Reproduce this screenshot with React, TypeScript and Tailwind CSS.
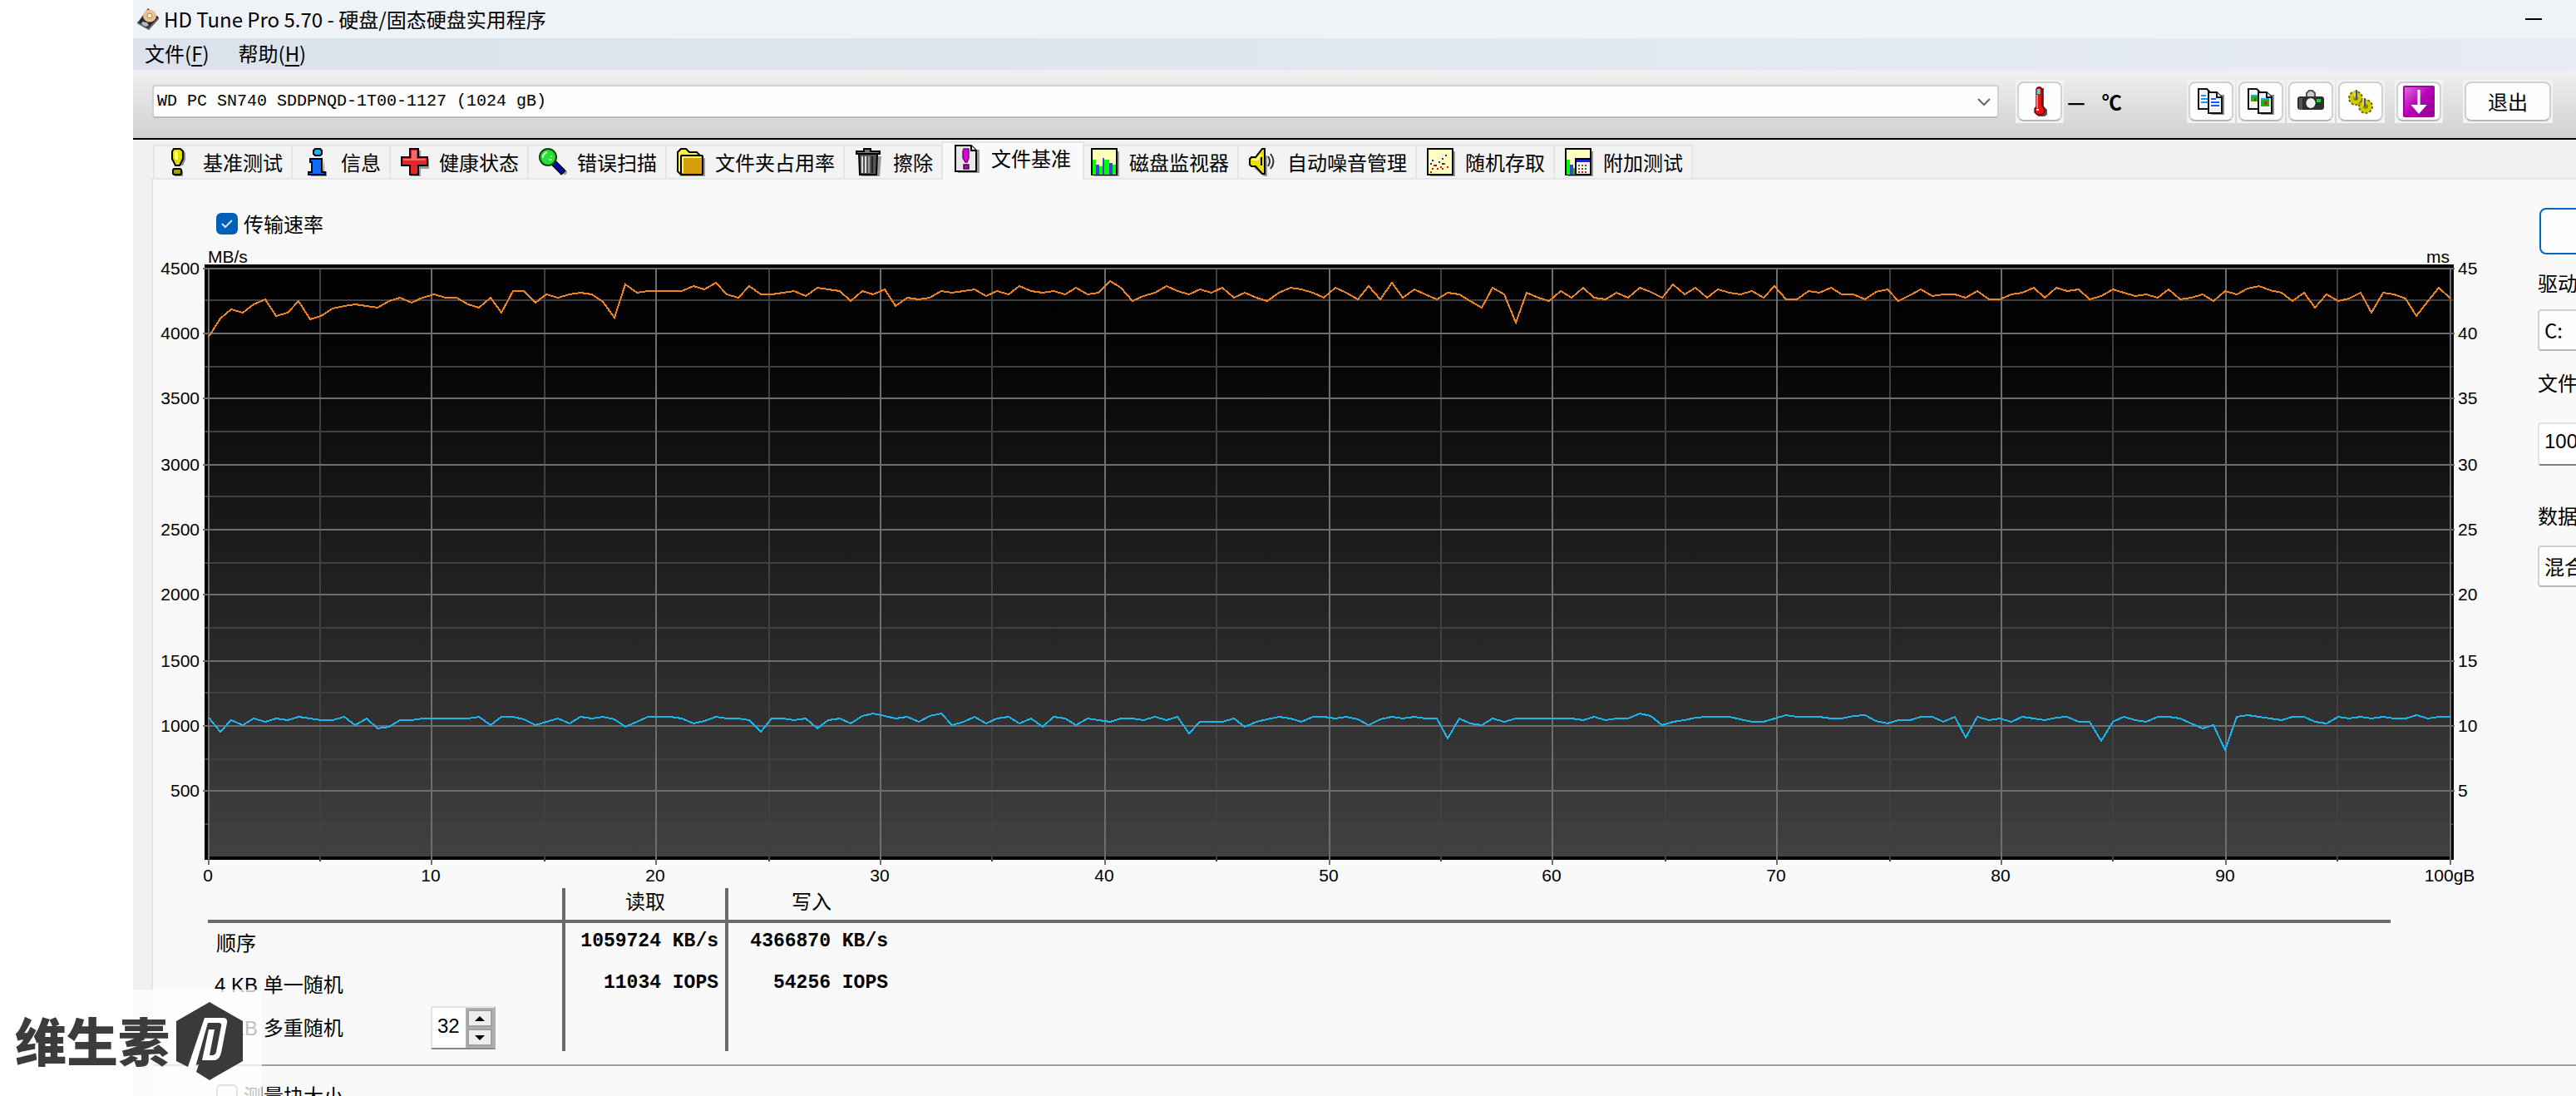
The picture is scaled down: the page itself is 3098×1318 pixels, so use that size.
import { useState } from 'react'
import type { ReactNode } from 'react'

// Sample heights in chart units, measured down from the top of the frame
const writeSamples = [
  88, 66, 55, 59, 49, 43, 63, 59, 45, 67, 63, 54, 51, 49, 51, 53, 45, 41, 47, 41,
  37, 41, 41, 49, 53, 41, 59, 33, 33, 47, 37, 41, 37, 35, 37, 46, 65, 25, 35, 33,
  33, 33, 33, 27, 31, 23, 37, 41, 27, 37, 37, 35, 33, 39, 29, 31, 33, 45, 33, 37,
  31, 51, 41, 43, 41, 33, 35, 33, 31, 39, 33, 37, 27, 33, 35, 33, 37, 29, 37, 35,
  21, 29, 45, 39, 35, 27, 33, 37, 31, 35, 29, 41, 35, 41, 45, 35, 29, 31, 35, 41,
  29, 35, 43, 27, 43, 23, 41, 31, 37, 43, 35, 37, 45, 53, 29, 37, 71, 35, 41, 45,
  33, 41, 29, 41, 43, 35, 41, 29, 34, 41, 25, 37, 29, 41, 31, 35, 37, 33, 41, 27,
  43, 43, 33, 35, 29, 37, 37, 43, 34, 31, 45, 38, 31, 39, 37, 37, 41, 33, 43, 43,
  37, 35, 29, 41, 29, 33, 31, 43, 39, 31, 35, 39, 37, 41, 31, 43, 41, 37, 45, 33,
  37, 30, 27, 32, 35, 45, 35, 53, 37, 45, 42, 35, 59, 35, 37, 42, 63, 45, 29, 42,
]

const readSamples = [
  546, 563, 549, 555, 547, 551, 547, 549, 545, 547, 549, 549, 545, 555, 547, 559, 557, 549, 549, 547,
  547, 547, 547, 547, 545, 555, 545, 545, 548, 555, 551, 547, 553, 545, 547, 545, 548, 557, 551, 545,
  545, 545, 547, 553, 550, 545, 547, 547, 549, 563, 547, 547, 549, 547, 559, 549, 547, 553, 544, 541,
  544, 547, 545, 551, 544, 541, 555, 551, 545, 553, 547, 545, 553, 547, 557, 545, 547, 555, 547, 549,
  551, 547, 547, 549, 545, 549, 545, 565, 551, 551, 551, 547, 557, 551, 548, 545, 547, 551, 545, 545,
  547, 545, 548, 555, 548, 545, 547, 545, 547, 547, 571, 547, 553, 555, 547, 551, 547, 547, 547, 547,
  547, 547, 549, 545, 549, 547, 547, 541, 544, 555, 551, 549, 546, 545, 545, 545, 548, 551, 551, 547,
  543, 545, 545, 545, 547, 547, 544, 543, 550, 553, 549, 549, 545, 545, 551, 545, 570, 545, 549, 547,
  551, 545, 547, 549, 546, 545, 551, 551, 574, 551, 545, 549, 551, 545, 545, 547, 553, 559, 555, 585,
  545, 543, 545, 547, 549, 545, 545, 551, 553, 545, 547, 545, 547, 545, 547, 547, 543, 547, 545, 545,
]

// Grid lines are two units thick and sit on even coordinates
const colAt = (i: number) => 2 * Math.floor((i * 2696) / 20)
const rowAt = (i: number) => 4 + 2 * Math.floor((i * 708) / 18)
const range = (n: number) => Array.from({ length: n }, (_, i) => i)
const toPoints = (samples: number[]) =>
  samples.map((y, i) => `${Math.round(1 + (i * 2696) / (samples.length - 1))},${y - 1}`).join(' ')

function TransferChart() {
  return (
    <svg viewBox="-60 -22 2812 768" className="block w-full" fontFamily='"Liberation Sans", Arial, sans-serif' fontSize="21">
      <defs>
        <linearGradient id="plot" x1="0" y1="0" x2="0" y2="1">
          <stop offset="0" stopColor="#000" />
          <stop offset="0.1" stopColor="#020202" />
          <stop offset="1" stopColor="#414141" />
        </linearGradient>
      </defs>
      <rect x="-4" y="0" width="2705" height="716" fill="#000" />
      <rect x="0" y="4" width="2697" height="708" fill="url(#plot)" />
      <g fill="#404040" shapeRendering="crispEdges">
        {range(10).map(i => <rect key={i} x={colAt(i + 0.5)} y="4" width="2" height="714" />)}
        {range(9).map(i => <rect key={i} x="-4" y={rowAt(i + 0.5)} width="2704" height="2" />)}
      </g>
      <g fill="#6e6e6e" shapeRendering="crispEdges">
        {range(11).map(i => <rect key={i} x={colAt(i)} y="4" width="2" height="718" />)}
        {range(9).map(i => <rect key={i} x="-6" y={rowAt(i)} width="2708" height="2" />)}
      </g>
      <g fill="none" strokeWidth="2" shapeRendering="crispEdges">
        <polyline points={toPoints(writeSamples)} stroke="#f08220" />
        <polyline points={toPoints(readSamples)} stroke="#1cb4ea" />
      </g>
      <g fill="#000">
        <text x="0" y="-2">MB/s</text>
        <text x="2696" y="-2" textAnchor="end">ms</text>
        {range(9).map(i => (
          <text key={i} x="-10" y={rowAt(i) + 8} textAnchor="end">{4500 - i * 500}</text>
        ))}
        {range(9).map(i => (
          <text key={i} x="2706" y={rowAt(i) + 8}>{45 - i * 5}</text>
        ))}
        {range(11).map(i => (
          <text key={i} x={colAt(i)} y="742" textAnchor="middle">{i === 10 ? '100gB' : i * 10}</text>
        ))}
      </g>
    </svg>
  )
}

function Icon({ children, size = 'size-[34px]', box = '0 0 17 17' }: { children: ReactNode; size?: string; box?: string }) {
  return <svg viewBox={box} className={`${size} shrink-0`} aria-hidden="true">{children}</svg>
}

const icons = {
  benchmark: (
    <Icon>
      <path d="M6 1h5l1.5 2v4L11 10.5H8L5.500 7z" fill="#888" />
      <path d="M5.500.5h4L11 2v4.500l-2 4H6.500l-2-4V2z" fill="#dede00" stroke="#000" />
      <path d="M6 2h2v5H6.500L6 5z" fill="#ffff70" />
      <path d="M6 13.500h5V17H6z" fill="#888" />
      <rect x="5" y="12.500" width="5" height="3.500" rx="1" fill="#a0a000" stroke="#000" />
    </Icon>
  ),
  info: (
    <Icon>
      <path d="M13 6v8h1.500v3H5v-1h7z" fill="#888" />
      <path d="M6.500 1.500l1-1h3l1 1v2l-1 1h-3l-1-1z" fill="#12b4f4" stroke="#000" />
      <path d="M4.500 6.500h7v8h2V16h-10v-1.500h2v-6h-1z" fill="#0a6cf8" stroke="#000" />
    </Icon>
  ),
  health: (
    <Icon>
      <path d="M6 1.500h6v5h5v6h-5V17H6z" fill="#999" />
      <path d="M5.500.5h5v5H16v5h-5.500V16h-5v-5.500h-5v-5h5z" fill="#e02828" stroke="#000" />
      <path d="M6.500 1.500h3v5H15v1H6.500zM1.500 6.500h5v1h-5z" fill="#f66" />
    </Icon>
  ),
  scan: (
    <Icon>
      <path d="M10 9.500l6.500 6" stroke="#999" strokeWidth="2.500" />
      <path d="M8.500 8.500L15 15" stroke="#000" strokeWidth="4" />
      <path d="M9 9l5.500 5.500" stroke="#0404b8" strokeWidth="2" />
      <circle cx="5.500" cy="5.500" r="5" fill="#2cdc38" stroke="#084808" />
      <path d="M2.500 6A3.500 3.500 0 0 1 5 2.500" stroke="#c8ffc8" fill="none" />
      <path d="M6 7h2M7 5h1" stroke="#98f898" />
    </Icon>
  ),
  folder: (
    <Icon>
      <path d="M5 6h12v11H2v-2h3z" fill="#999" />
      <path d="M.5 13.500v-11l2-2h3l2 2H12L13.500 4v3" fill="#fcf050" stroke="#000" />
      <path d="M.5 2.500V14l2 2" fill="none" stroke="#000" />
      <rect x="2.500" y="4.500" width="13" height="11.500" rx=".5" fill="#d8a008" stroke="#000" />
      <path d="M3.500 15V5.500h11" stroke="#fcf080" fill="none" />
    </Icon>
  ),
  trash: (
    <Icon>
      <path d="M4 5h12l-1 12H4z" fill="#999" />
      <path d="M2.500 3.500h11L13 16H3z" fill="#555" stroke="#000" />
      <path d="M4.500 5v10M6.500 5v10" stroke="#ddd" />
      <path d="M8.500 5v10" stroke="#999" />
      <path d="M10.500 5v10" stroke="#222" />
      <path d="M1 3.500V2h4.500V.5h4V2H15v1.500z" fill="#777" stroke="#000" />
    </Icon>
  ),
  file: (
    <Icon>
      <path d="M3 3h13v14H3z" fill="#999" />
      <path d="M1.500.5H11l3 3V16H1.500z" fill="#e8e8e8" stroke="#000" />
      <path d="M11 .5v3h3" fill="#fff" stroke="#000" />
      <path d="M6.500 2.500h3V8l-1 2.500h-1L6 8V4z" fill="#e000e0" stroke="#700070" strokeWidth=".7" />
      <rect x="6.500" y="12" width="3" height="2.500" fill="#c000c0" stroke="#400040" strokeWidth=".7" />
    </Icon>
  ),
  monitor: (
    <Icon>
      <path d="M2 2h15v15H2z" fill="#999" />
      <rect x=".5" y=".5" width="15" height="15.500" fill="#ffffb8" stroke="#000" />
      <path d="M1 7h2v9H1zM5 11h2v5H5zM8 7h3v9H8zM13 10h2v6h-2z" fill="#0f0" />
      <path d="M3 10h2v6H3zM7 6h1v10H7zM11 9h2v7h-2z" fill="#4040d8" />
    </Icon>
  ),
  sound: (
    <Icon>
      <path d="M3 12l6 5h2V4z" fill="#999" />
      <path d="M.5 6.500l1-1H4l4-5h1.500v15H8L4 11H1.500l-1-1z" fill="#ece000" stroke="#000" />
      <path d="M7.500 5.500v5" stroke="#000" />
      <path d="M2 7h3l2-3" stroke="#ffff90" fill="none" />
      <path d="M11.500 5q2 3 0 6M13 3.500q3.500 4.500 0 9" stroke="#333" fill="none" />
    </Icon>
  ),
  random: (
    <Icon>
      <path d="M2 2h15v15H2z" fill="#999" />
      <rect x=".5" y=".5" width="15" height="15.500" fill="#ffffc0" stroke="#000" />
      <path d="M2 9h1v1H2zM3 7h1v1H3zM5 10h1v1H5zM7 8h1v1H7zM9 6h1v1H9zM11 4h1v1h-1zM9 9h1v1H9z" fill="#2020d0" />
      <path d="M2 14h1v1H2zM3 12h1v1H3zM6 12h1v1H6zM8 11h1v1H8zM10 9h1v1h-1zM12 11h1v1h-1zM9 12h1v1H9zM4 10h1v1H4z" fill="#e01010" />
    </Icon>
  ),
  extra: (
    <Icon>
      <path d="M2 2h15v15H2z" fill="#999" />
      <rect x=".5" y=".5" width="15" height="15.500" fill="#ffffc0" stroke="#000" />
      <path d="M1 7h2v9H1z" fill="#0f0" />
      <path d="M3 10h2v6H3z" fill="#4040d8" />
      <path d="M5 12h1v4H5z" fill="#0c0" />
      <rect x="6.500" y="6.500" width="9" height="9.500" fill="#f4f4f4" stroke="#000" />
      <path d="M7 7h8v1.500H7z" fill="#2020d0" />
      <path d="M8 10h1v1H8zM10 10h1v1h-1zM12 12h1v1h-1zM8 14h1v1H8z" fill="#208020" />
      <path d="M12 10h1v1h-1zM8 12h1v1H8zM10 12h1v1h-1zM10 14h1v1h-1zM12 14h1v1h-1z" fill="#e01010" />
    </Icon>
  ),
}

const tabs = [
  { id: 'benchmark', title: '基准测试', icon: icons.benchmark },
  { id: 'info', title: '信息', icon: icons.info },
  { id: 'health', title: '健康状态', icon: icons.health },
  { id: 'scan', title: '错误扫描', icon: icons.scan },
  { id: 'folder', title: '文件夹占用率', icon: icons.folder },
  { id: 'erase', title: '擦除', icon: icons.trash },
  { id: 'file', title: '文件基准', icon: icons.file },
  { id: 'monitor', title: '磁盘监视器', icon: icons.monitor },
  { id: 'aam', title: '自动噪音管理', icon: icons.sound },
  { id: 'random', title: '随机存取', icon: icons.random },
  { id: 'extra', title: '附加测试', icon: icons.extra },
]

function DocPair({ picture = false }: { picture?: boolean }) {
  return (
    <Icon size="size-8" box="0 0 16 16">
      <path d="M.5.5h5l2 2v10h-7z" fill="#f4f4f4" stroke="#111" />
      <path d="M8 4h8v12H8z" fill="#888" />
      <path d="M6.500 2.500h5l3 3V15h-8z" fill="#f4f4f4" stroke="#111" />
      <path d="M11.500 2.500v3h3" fill="#fff" stroke="#111" />
      {picture ? (
        <>
          <path d="M2 4h4v4H2zM8 6h5v5H8z" fill="#14b814" />
          <path d="M2 4h4v1H2zM8 6h5v1H8z" fill="#28a0f0" />
          <path d="M4 6h1v2H4zM10 8h2v2h-2z" fill="#c83000" />
        </>
      ) : (
        <>
          <path d="M2 4.500h3M2 6.500h4M2 8.500h4" stroke="#1898f0" />
          <path d="M8 6.500h3M8 8.500h5M8 10.500h5" stroke="#1060f0" />
        </>
      )}
    </Icon>
  )
}

function ToolButton({ label, children }: { label: string; children: ReactNode }) {
  return (
    <div className="shrink-0 bg-[#f2f2f2] p-0.5">
      <button aria-label={label} className="flex h-12 w-[54px] items-center justify-center rounded-lg border-2 border-b-[#b8b8b8] border-[#d0d0d0] bg-[#fdfdfd]">
        {children}
      </button>
    </div>
  )
}

function Toolbar() {
  return (
    <div className="flex h-[84px] items-center border-b-2 border-black bg-linear-to-b from-[#f0f0f0] to-[#d0d0d0] pr-7 pb-1.5 pl-[23px]">
      <div className="relative flex-1">
        <select aria-label="硬盘" className="block h-10 w-full appearance-none rounded-sm border-2 border-b-[#b8b8b8] border-[#d0d0d0] bg-[#fdfdfd] pl-1 font-['Liberation_Mono',monospace] text-[20px] leading-9">
          <option>WD PC SN740 SDDPNQD-1T00-1127 (1024 gB)</option>
        </select>
        <svg viewBox="0 0 16 10" className="pointer-events-none absolute top-4 right-2.5 h-2.5 w-4" fill="none" stroke="#666" strokeWidth="2">
          <path d="M1 1l7 7 7-7" />
        </svg>
      </div>
      <div className="ml-5 flex items-center">
        <ToolButton label="温度">
          <Icon size="h-9 w-5" box="0 0 10 18">
            <path d="M4.500 1h3v11l2 2v3L8 18H4z" fill="#555" />
            <path d="M3 1.500l1-1h1.500l1 1v10l1.500 2v2L6.500 17h-3L2 15.500v-2l1-1.500z" fill="#e81010" stroke="#600" strokeWidth=".7" />
            <path d="M3.300 1.500h2v3h-2z" fill="#50e0e0" />
            <path d="M3.500 5v8" stroke="#f77" />
            <path d="M3 14h1.500" stroke="#fff" />
          </Icon>
        </ToolButton>
        <span className="flex w-[148px] gap-5 pl-1 leading-8 font-bold">
          <span>—</span>
          <span>℃</span>
        </span>
        <div className="flex gap-0.5">
          <ToolButton label="复制文本"><DocPair /></ToolButton>
          <ToolButton label="复制图像"><DocPair picture /></ToolButton>
          <ToolButton label="截图">
            <Icon size="size-8" box="0 0 16 16">
              <path d="M5.500 5V3L7 1.500h2L10.500 3v2" fill="#ccc" stroke="#555" />
              <path d="M1 5h14l1 1v6l-1 1H1l-1-1V6z" fill="#2c2f30" />
              <path d="M1 6h2v7H1z" fill="#555" />
              <ellipse cx="8" cy="9" rx="2.800" ry="3" fill="#f0f0f0" />
              <path d="M11.500 6.500h2.500v2h-2.500z" fill="#20d030" />
            </Icon>
          </ToolButton>
          <ToolButton label="选项">
            <Icon size="size-8" box="0 0 16 16">
              <g fill="#d0cc00" stroke="#6c6800" strokeDasharray="1.500 1">
                <circle cx="5" cy="6" r="4" />
                <circle cx="11" cy="11" r="4" />
              </g>
              <circle cx="5" cy="6" r="1.500" fill="#888400" />
              <circle cx="11" cy="11" r="1.500" fill="#888400" />
              <path d="M5.500 1v6M10.500 6v5" stroke="#555" />
              <path d="M4.500 1v5M9.500 6v5" stroke="#ddd" strokeWidth=".6" />
            </Icon>
          </ToolButton>
        </div>
      </div>
      <div className="ml-3">
        <ToolButton label="保存">
          <Icon size="size-[38px]" box="0 0 19 19">
            <defs>
              <linearGradient id="purple" x1="0" y1="0" x2="1" y2="1">
                <stop offset="0" stopColor="#e070e0" />
                <stop offset=".5" stopColor="#b800b8" />
                <stop offset="1" stopColor="#900090" />
              </linearGradient>
            </defs>
            <rect x=".5" y=".5" width="18" height="18" rx=".5" fill="url(#purple)" stroke="#a000a0" />
            <path d="M8.700 2.500h1.600v9h4L9.500 17l-4.800-5.500h4z" fill="#fff" />
          </Icon>
        </ToolButton>
      </div>
      <div className="ml-6 shrink-0 bg-[#f2f2f2] p-0.5">
        <button className="block h-12 w-[104px] rounded-lg border-2 border-b-[#b8b8b8] border-[#d0d0d0] bg-[#fdfdfd]">退出</button>
      </div>
    </div>
  )
}

function CheckField({ id, label, checked }: { id: string; label: string; checked?: boolean }) {
  return (
    <div className="flex h-[26px] items-center gap-[7px] pl-[76px]">
      <span className="relative size-[26px]">
        <input
          id={id}
          type="checkbox"
          defaultChecked={checked}
          className="peer block size-[26px] appearance-none rounded-md border-2 border-[#8a8a8a] bg-[#f5f5f5] checked:border-[#005fb8] checked:bg-[#005fb8]"
        />
        <svg viewBox="0 0 26 26" className="pointer-events-none absolute inset-0 hidden peer-checked:block" fill="none" stroke="#cfe4f6" strokeWidth="2">
          <path d="M7 13l4 4 8-8" />
        </svg>
      </span>
      <label htmlFor={id} className="leading-[26px]">{label}</label>
    </div>
  )
}

function ResultCell({ value, line }: { value: string; line?: boolean }) {
  return (
    <td className={line ? 'border-r-4' : ''}>
      <div className="pr-2 pb-1.5 text-right font-['Liberation_Mono',monospace] text-[23px] font-bold">{value}</div>
    </td>
  )
}

function ResultsTable() {
  return (
    <table className="mt-1 mr-[127px] ml-[60px] table-fixed border-separate border-spacing-0 text-left font-['Liberation_Sans','Noto_Sans_CJK_SC',sans-serif]">
      <colgroup>
        <col className="w-[430px]" />
        <col className="w-[196px]" />
        <col className="w-[200px]" />
        <col />
      </colgroup>
      <thead>
        <tr className="h-[42px] text-center leading-8 *:border-b-4 *:border-[#6a6a6a] *:p-0 *:pb-1 *:font-normal">
          <th className="border-r-4"></th>
          <th className="border-r-4">读取</th>
          <th>写入</th>
          <th></th>
        </tr>
      </thead>
      <tbody className="*:*:border-[#6a6a6a] *:*:p-0 *:*:leading-8">
        <tr className="h-[50px]">
          <th className="border-r-4 font-normal"><span className="pl-2.5">顺序</span></th>
          <ResultCell value="1059724 KB/s" line />
          <ResultCell value="4366870 KB/s" />
          <td></td>
        </tr>
        <tr className="h-[50px]">
          <th className="border-r-4 font-normal"><span className="pl-2">4 KB 单一随机</span></th>
          <ResultCell value="11034 IOPS" line />
          <ResultCell value="54256 IOPS" />
          <td></td>
        </tr>
        <tr className="h-[54px]">
          <th className="border-r-4 align-top font-normal">
            <div className="flex pl-2">
              <label htmlFor="depth" className="w-[260px] leading-[54px]">4 KB 多重随机</label>
              <span className="flex h-[52px] w-[78px] items-center border-2 border-t-[#e4e4e4] border-r-[#b0b0b0] border-b-[#888] border-l-[#e4e4e4] bg-white">
                <input id="depth" defaultValue="32" className="w-10 pb-1 pl-1.5" />
                <span className="flex h-full flex-1 flex-col justify-between bg-[#b0b0b0] p-0.5 *:flex *:h-[21px] *:items-center *:justify-center *:border-2 *:border-[#a0a0a0] *:bg-[#eee]">
                  <button aria-label="增加"><svg viewBox="0 0 12 6" className="h-1.5 w-3"><path d="M6 0l6 6H0z" /></svg></button>
                  <button aria-label="减少"><svg viewBox="0 0 12 6" className="h-1.5 w-3"><path d="M0 0h12L6 6z" /></svg></button>
                </span>
              </span>
            </div>
          </th>
          <td className="border-r-4"></td>
          <td></td>
          <td></td>
        </tr>
      </tbody>
    </table>
  )
}

function SidePanel() {
  return (
    <div className="flex w-[46px] shrink-0 flex-col items-start pt-[34px] whitespace-nowrap *:shrink-0">
      <button className="ml-0.5 h-14 w-60 rounded-lg border-2 border-[#0067c0] bg-[#fdfdfd]" aria-label="开始"></button>
      <label htmlFor="drive" className="mt-[18px] leading-8">驱动器</label>
      <select id="drive" className="mt-4 h-[50px] w-60 appearance-none rounded-sm border-2 border-b-[#b8b8b8] border-[#d0d0d0] bg-[#fdfdfd] pl-1.5">
        <option>C:</option>
      </select>
      <label htmlFor="length" className="mt-[22px] leading-8">文件长度</label>
      <input id="length" defaultValue="100" className="mt-8 h-[52px] w-60 rounded-sm border-2 border-[#e4e4e4] border-b-[#808080] bg-white pb-1.5 pl-1.5 font-['Liberation_Sans',sans-serif]" />
      <label htmlFor="pattern" className="mt-11 leading-8">数据模式</label>
      <select id="pattern" className="mt-5 h-[50px] w-60 appearance-none rounded-sm border-2 border-b-[#b8b8b8] border-[#d0d0d0] bg-[#fdfdfd] pl-1.5">
        <option>混合</option>
      </select>
    </div>
  )
}

function Watermark() {
  return (
    <div className="absolute bottom-0 left-0 flex h-32 w-[315px] items-center bg-white/75 pb-1 pl-[18px] text-[#3c3c3c]">
      <span className="pb-1 text-[62px] leading-none font-black">维生素</span>
      <svg viewBox="0 0 80 94" className="ml-2 h-[94px] w-20">
        <path d="M40 0l40 23v48L40 94 24 84l3-9-13 3L0 71V23z" fill="#3a3a3a" />
        <path d="M34 19h22q6 0 5 6l-7 36q-2 9-9 9H31l8-37h7l-6 31h3q4 0 5-4l6-31q1-4-3-4H38L23 78h-9z" fill="#fff" />
      </svg>
    </div>
  )
}

export default function App() {
  const [active, setActive] = useState('file')

  return (
    <div className="relative h-screen overflow-hidden bg-white pl-40 font-['Noto_Sans_CJK_SC',sans-serif] text-[24px] text-black">
      <div className="flex min-h-full flex-col bg-[#f0f0f0]">
        <header className="flex h-[46px] items-center bg-[#eff3f8] pr-[41px] pl-1">
          <Icon size="size-7" box="0 0 28 28">
            <path d="M14 1l13 11-12 15L1 19z" fill="#2a2a2e" />
            <path d="M1 17l13 8 13-14v3L15 27 1 19z" fill="#66666a" />
            <ellipse cx="16" cy="10" rx="8" ry="7.500" fill="#e8c48c" />
            <ellipse cx="16" cy="10" rx="3" ry="2.800" fill="#fff4dc" stroke="#a88450" />
            <path d="M7 17l6 1 2 4-4 1-5-3z" fill="#b8b8bc" />
          </Icon>
          <h1 className="ml-[5px] flex-1">HD Tune Pro 5.70 - 硬盘/固态硬盘实用程序</h1>
          <button aria-label="最小化" className="h-5 w-5 border-y-[9px] border-transparent bg-black bg-clip-padding"></button>
        </header>
        <nav className="flex h-[38px] items-center gap-[35px] bg-linear-to-r from-[#dbe2eb] to-[#e7ecf4] pb-0.5 pl-3.5">
          <button>文件(<u className="underline-offset-4">F</u>)</button>
          <button>帮助(<u className="underline-offset-4">H</u>)</button>
        </nav>
        <Toolbar />
        <div className="flex h-[46px] items-end pl-6" role="tablist">
          {tabs.map(tab => (
            <button
              key={tab.id}
              role="tab"
              aria-selected={tab.id === active}
              onClick={() => setActive(tab.id)}
              className={
                tab.id === active
                  ? 'relative z-10 -mr-1.5 -mb-0.5 flex h-[46px] items-start gap-3 border-2 border-b-0 border-[#e5e5e5] bg-[#f9f9f9] pt-0.5 pr-3.5 pl-3 leading-8'
                  : 'flex h-10 items-center gap-3 border-t-2 border-l-2 border-[#e5e5e5] bg-[#f3f3f3] pr-2.5 pl-3 leading-8 last:border-r-2'
              }
            >
              {tab.icon}
              {tab.title}
            </button>
          ))}
        </div>
        <main className="ml-[22px] flex-1 border-t-2 border-l-2 border-[#e5e5e5] bg-[#f9f9f9]">
          <div className="flex">
            <div className="mr-[50px] ml-1.5 flex min-w-0 flex-1 flex-col pt-10">
              <div className="-ml-1.5"><CheckField id="rate" label="传输速率" checked /></div>
              <div className="mt-3.5"><TransferChart /></div>
              <ResultsTable />
            </div>
            <SidePanel />
          </div>
          <hr className="mt-4 mb-5 h-1 border-t-2 border-b-2 border-t-[#a0a0a0] border-b-white" />
          <CheckField id="block" label="测量块大小" />
        </main>
      </div>
      <Watermark />
    </div>
  )
}
